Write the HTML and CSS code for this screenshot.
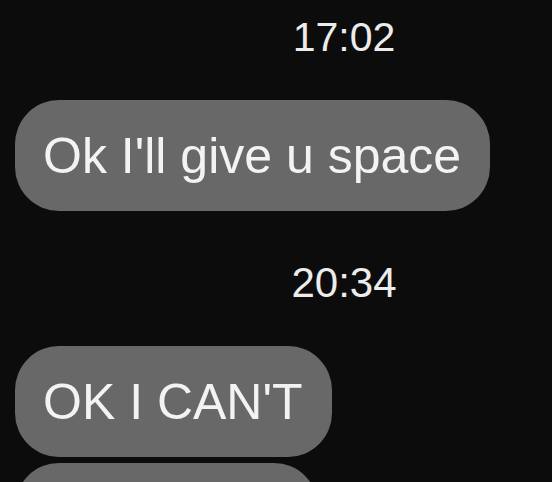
FILE: index.html
```html
<!DOCTYPE html>
<html lang="en">
<head>
<meta charset="utf-8">
<title>Messages</title>
<link rel="stylesheet" href="styles.css">
</head>
<body>
<div class="chat">
  <div class="time time-first">17:02</div>
  <div class="bubble bubble-first">Ok I'll give u space</div>
  <div class="time time-second">20:34</div>
  <div class="bubble bubble-second">OK I CAN'T</div>
  <div class="bubble bubble-third">&nbsp;</div>
</div>
</body>
</html>
```
FILE: styles.css
```css
html, body {
  margin: 0;
  padding: 0;
  background: #0c0c0c;
  height: 100%;
  overflow: hidden;
}

.chat {
  display: flex;
  flex-direction: column;
  align-items: flex-start;
  padding: 17px 0 0 15px;
  font-family: "Liberation Sans", Arial, sans-serif;
}

.time {
  align-self: stretch;
  box-sizing: border-box;
  width: 552px;
  margin-left: -15px;
  padding-left: 136px;
  text-align: center;
  color: #ececec;
}

.time-first {
  font-size: 41px;
  line-height: 41px;
}

.time-second {
  font-size: 42px;
  line-height: 42px;
  margin-top: 51px;
}

.bubble {
  background: #686868;
  color: #f3f3f3;
  font-size: 50px;
  line-height: 50px;
  padding: 31px 29px 30px 28px;
  border-radius: 44px;
  white-space: nowrap;
}

.bubble-first {
  margin-top: 42px;
}

.bubble-second {
  margin-top: 42px;
}

.bubble-third {
  margin-top: 6px;
  width: 246px;
}
```
